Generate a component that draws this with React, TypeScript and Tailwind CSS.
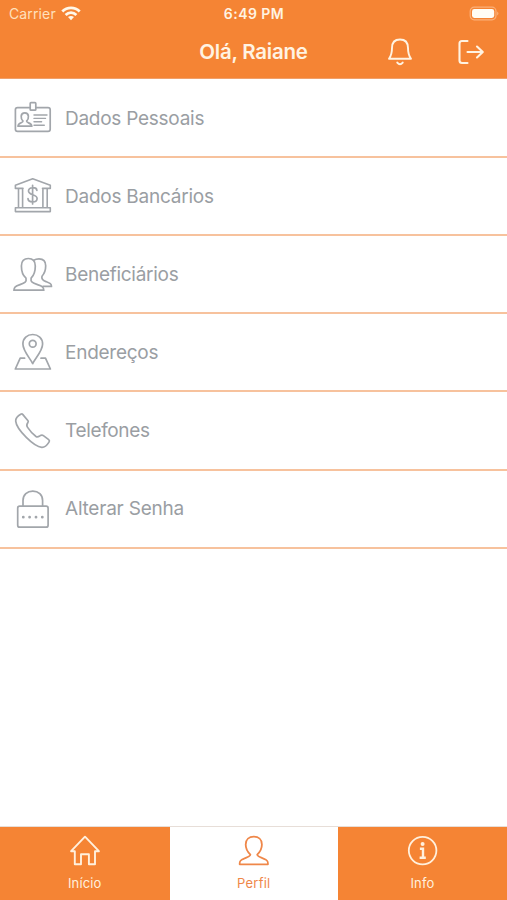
import type { ReactNode } from "react";

function Icon({ children }: { children: ReactNode }) {
  return (
    <svg viewBox="0 0 40 40" className="size-10 shrink-0 text-[#a2a6ab]" fill="none" stroke="currentColor" strokeWidth="1.7" strokeLinejoin="round" strokeLinecap="round">
      {children}
    </svg>
  );
}

const rows: { label: string; tracking: string; icon: ReactNode }[] = [
  {
    label: "Dados Pessoais",
    tracking: "tracking-[-0.26px]",
    icon: (
      <>
        <path d="M17 9.6H4.6Q2.4 9.6 2.4 11.8V31.2Q2.4 33.4 4.6 33.4H35Q37.2 33.4 37.2 31.2V11.8Q37.2 9.6 35 9.6H23" />
        <rect x="17.2" y="4.6" width="5.6" height="7.6" rx="0.8" />
        <path d="M10 23.2C7.6 20.8 7 14.8 11.8 14.8S16 20.8 13.6 23.2C13.4 25 18.8 24.8 18.8 28.2H5C5 24.8 10.2 25 10 23.2Z" />
        <path d="M21 17H34M21 20.4H32.5M21 23.8H28.6M21 27.2H31.3" strokeWidth="1.4" />
      </>
    ),
  },
  {
    label: "Dados Bancários",
    tracking: "tracking-[-0.24px]",
    icon: (
      <>
        <path d="M2.4 12.4V9.2L19.7 2.8L37.3 9.2V12.4H29.5M2.4 12.4H10M5.5 12.4V31.5M9.6 12.4V31.5M29.9 12.4V31.5M34.2 12.4V31.5M2.4 31.7H37.3V35.6H2.4Z" strokeWidth="1.6" />
        <path d="M19.6 9.3V28M23.9 14.3C23.4 10.7 15.5 10.8 15.5 15C15.5 19.6 24.1 17.8 24.1 22.4C24.1 27 15.2 27 15 22.6" />
      </>
    ),
  },
  {
    label: "Beneficiários",
    tracking: "tracking-[-0.28px]",
    icon: (
      <>
        <path d="M13 24.2C9.8 21.5 8.4 17.5 8.4 12C8.4 7 11 4.5 15.3 4.5S22.3 7 22.3 12C22.3 17.5 20.8 21.5 18.1 24.2C17.3 28 19.5 29 24.5 30.6C29.5 32.2 30.6 33.2 30.8 36.2H.9C1.1 33.2 2.3 32.1 7 30.6C12 29 13.8 28 13 24.2Z" />
        <path d="M21 6.2C22.3 5.2 24.2 4.8 26 4.8C30.3 4.8 32.7 7.4 32.7 11.8C32.7 16 31.2 19.8 29 22.2C28.2 25 29.5 26.3 33 27.6C37 29.2 38.5 29.7 38.5 32.4H30" />
      </>
    ),
  },
  {
    label: "Endereços",
    tracking: "tracking-[-0.26px]",
    icon: (
      <>
        <path d="M19.7 31.6C17 26.1 9.9 18.9 9.9 12C9.9 6.1 14.2 2.5 19.7 2.5S29.6 6.1 29.6 12C29.6 18.9 22.4 26.1 19.7 31.6Z" />
        <circle cx="19.7" cy="11.8" r="3.4" />
        <path d="M11.6 26.2H7.2L2.3 37H37.4L32.5 26.2H28" />
      </>
    ),
  },
  {
    label: "Telefones",
    tracking: "tracking-[-0.34px]",
    icon: (
      <path transform="translate(0 -.7)" d="M8.1 3.8Q9 3.2 9.9 4.3L15 10.4Q15.6 11.2 14.9 12.2C13.6 14 13.1 14.9 14.4 16.8C17 20.8 19.7 23.7 23 26.2C24.7 27.3 25.4 26.5 27.3 25.3Q29 24.3 30.4 25.3L35.7 29.3Q37 30.4 36 31.8C34.3 34.5 32.1 37.3 28.8 37.1C24.7 36.7 18.4 32.2 13.3 27.1C7.4 21.2 3.1 15.1 2.7 10.8C2.4 7.5 5.2 5.5 8.1 3.8Z" />
    ),
  },
  {
    label: "Alterar Senha",
    tracking: "tracking-[-0.22px]",
    icon: (
      <>
        <rect x="4.7" y="17.2" width="30.4" height="21" rx="2" />
        <path d="M10 17V11.6C10 5.8 14.2 2.1 19.8 2.1S29.6 5.8 29.6 11.6V17" />
        <path d="M10.3 28.2h.01M16.6 28.2h.01M23 28.2h.01M29.3 28.2h.01" strokeWidth="2.8" />
      </>
    ),
  },
];

export default function App() {
  return (
    <div className="flex h-[900px] w-[507px] flex-col overflow-hidden bg-white font-['Inter','Liberation_Sans',sans-serif]">
      <header className="h-[79px] shrink-0 border-b border-[#f0a06b] bg-[#f58434] text-[#fff3e2]">
        <div className="grid h-[27px] grid-cols-3 items-center pr-[7px] pl-[9px] text-[14px]">
          <div className="flex items-center gap-[5px] text-[#ffe0bd]">
            <span className="tracking-[0.13px]">Carrier</span>
            <svg viewBox="0 0 20 15" className="h-[15px] w-5 text-[#fff8ea]" fill="none" stroke="currentColor" strokeWidth="2.8">
              <path d="M1.3 5.6C6.2.7 13.8.7 18.7 5.6M4.6 9C7.8 6 12.2 6 15.4 9" />
              <path d="M7 11.1Q10 8.8 13 11.1L10 14.2Z" fill="currentColor" stroke="none" />
            </svg>
          </div>
          <span className="pr-px text-center font-semibold tracking-[0.45px]">6:49 PM</span>
          <svg viewBox="0 0 32 16" className="h-4 w-8 justify-self-end">
            <rect x="2.2" y="1.2" width="25.8" height="12.6" rx="4" fill="none" stroke="#fbb079" strokeWidth="1.2" />
            <rect x="4" y="3.1" width="22.2" height="8.8" rx="2.3" fill="#fffdf6" />
            <path d="M29.3 5.5Q31.5 7.5 29.3 9.5Z" fill="#fbbd8c" />
          </svg>
        </div>
        <div className="grid h-[51px] grid-cols-[1fr_auto_1fr] items-center">
          <span />
          <h1 className="text-[20.5px] font-semibold tracking-[-0.25px]">Olá, Raiane</h1>
          <div className="flex justify-end gap-[41px] pr-[21px] pb-px">
            <svg viewBox="0 0 30 30" className="size-[30px]" fill="none" stroke="currentColor" strokeWidth="1.9" strokeLinecap="round" strokeLinejoin="round">
              <path d="M15 2.5C9.7 2.5 7 6 7 11C7 16.5 6 19 4 21.8H26C24 19 23 16.5 23 11C23 6 20.3 2.5 15 2.5Z" />
              <path d="M12.3 25.6Q15 28.7 17.7 25.6" strokeWidth="2" />
            </svg>
            <svg viewBox="0 0 30 30" className="size-[30px]" fill="none" stroke="currentColor" strokeWidth="2.1" strokeLinecap="round" strokeLinejoin="round">
              <path d="M11.5 4H6Q3.5 4 3.5 6.5V23.5Q3.5 26 6 26H11.5M11.5 15H26.5M21 9.5L26.8 15L21 20.5" />
            </svg>
          </div>
        </div>
      </header>
      <main className="flex-1 pt-[0.7px]">
        {rows.map((row) => (
          <div key={row.label} className="flex h-[78.2px] items-center gap-3 border-b-2 border-[#f7c29d] pl-[13px]">
            <Icon>{row.icon}</Icon>
            <span className={`pt-[2px] text-[19px] text-[#9a9ea3] ${row.tracking}`}>{row.label}</span>
          </div>
        ))}
      </main>
      <nav className="grid h-[74px] shrink-0 grid-cols-[169.5px_168.5px_1fr] border-t border-[#e7ded8] text-[13px] leading-4 tracking-[0.15px]">
        <div className="flex flex-col items-center gap-2 bg-[#f58434] pt-2 text-[#fff0dd]">
          <svg viewBox="0 0 32 32" className="size-8" fill="none" stroke="currentColor" strokeWidth="1.9" strokeLinejoin="round" strokeLinecap="round">
            <path d="M2.1 16.2L16 1.7L29.9 16.2H26V29.3H19.9V19.3H12V29.3H5.8V16.2Z" />
          </svg>
          <span>Início</span>
        </div>
        <div className="flex flex-col items-center gap-2 bg-white pt-2 text-[#ef8749]">
          <svg viewBox="0 0 32 32" className="size-8" fill="none" stroke="currentColor" strokeWidth="1.8" strokeLinejoin="round">
            <path d="M12.4 19.6C9.4 16.8 7.7 13.5 7.7 9.5C7.7 4.3 11.2 1.7 15.8 1.7S23.9 4.3 23.9 9.5C23.9 13.5 22.2 16.8 19.2 19.6C19.2 21.3 21.5 22.3 26 23.8C29.5 25.1 30.2 26.2 29.9 29.3H1.7C1.4 26.2 2.1 25.1 5.6 23.8C10.1 22.3 12.4 21.3 12.4 19.6Z" />
          </svg>
          <span className="tracking-[0.25px]">Perfil</span>
        </div>
        <div className="flex flex-col items-center gap-2 bg-[#f58434] pt-2 text-[#fff0dd]">
          <svg viewBox="0 0 32 32" className="size-8" fill="none" stroke="currentColor" strokeWidth="1.8">
            <circle cx="15.6" cy="15.6" r="13.8" />
            <circle cx="15.6" cy="9" r="2" fill="currentColor" stroke="none" />
            <path d="M12.9 13.7H16V22.5M12.6 22.7H18.8" strokeWidth="2.4" />
          </svg>
          <span className="tracking-[0.2px]">Info</span>
        </div>
      </nav>
    </div>
  );
}
